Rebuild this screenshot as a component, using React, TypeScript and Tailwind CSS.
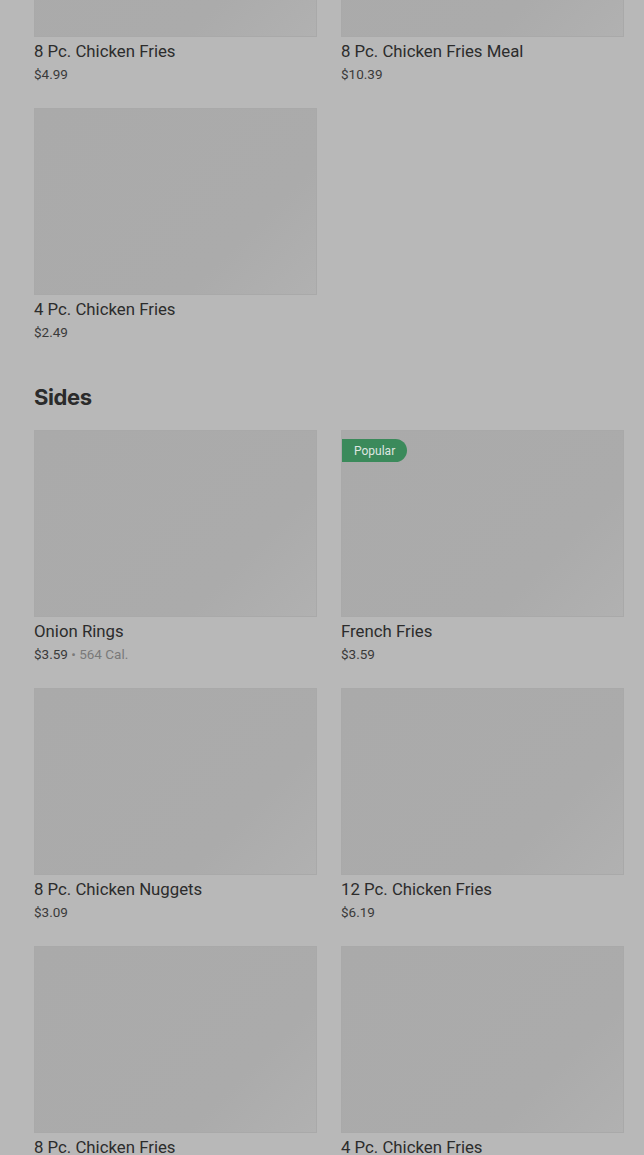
import React from 'react';

type Item = { name: string; price: string; cal?: string; popular?: boolean };

const sections: { title?: string; items: Item[] }[] = [
  {
    items: [
      { name: '8 Pc. Chicken Fries', price: '$4.99' },
      { name: '8 Pc. Chicken Fries Meal', price: '$10.39' },
      { name: '4 Pc. Chicken Fries', price: '$2.49' },
    ],
  },
  {
    title: 'Sides',
    items: [
      { name: 'Onion Rings', price: '$3.59', cal: '564 Cal.' },
      { name: 'French Fries', price: '$3.59', popular: true },
      { name: '8 Pc. Chicken Nuggets', price: '$3.09' },
      { name: '12 Pc. Chicken Fries', price: '$6.19' },
      { name: '8 Pc. Chicken Fries', price: '$4.99' },
      { name: '4 Pc. Chicken Fries', price: '$2.49' },
    ],
  },
];

const MenuCard: React.FC<{ item: Item }> = ({ item }) => (
  <div className="flex flex-col">
    <div className="relative h-[187px] w-full bg-[linear-gradient(135deg,#aaaaaa_0%,#ababab_72%,#b1b1b1_100%)] border border-[#a9a9a9]">
      {item.popular && (
        <span className="absolute left-0 top-2 h-[23px] px-3 flex items-center rounded-r-full bg-[#3b8a5b] text-[12px] text-[#dfe6e1]">
          Popular
        </span>
      )}
    </div>
    <p className="mt-1 text-[16.8px] leading-5 font-normal text-[#2c2c2c]">{item.name}</p>
    <p className="mt-[3px] text-[13.5px] leading-5 text-[#3a3a3a]">
      {item.price}
      {item.cal && <span className="text-[#7a7a7a]"> • {item.cal}</span>}
    </p>
  </div>
);

export default function App() {
  return (
    <div className="min-h-screen bg-[#b8b8b8] overflow-hidden h-[1155px]" style={{ fontFamily: 'Roboto, "Liberation Sans", sans-serif' }}>
      <div className="-mt-[150px] pl-[34px] pr-[20px]">
        {sections.map((s, i) => (
          <section key={i} className={i > 0 ? 'mt-[39px]' : ''}>
            {s.title && (
              <h2 className="text-[22px] leading-8 font-bold text-[#2b2b2b] mb-[17px] tracking-[-0.4px]" style={{ fontFamily: 'Inter, "Liberation Sans", sans-serif' }}>
                {s.title}
              </h2>
            )}
            <div className="grid grid-cols-2 gap-x-6 gap-y-6">
              {s.items.map((it, j) => (
                <MenuCard key={j} item={it} />
              ))}
            </div>
          </section>
        ))}
      </div>
    </div>
  );
}
